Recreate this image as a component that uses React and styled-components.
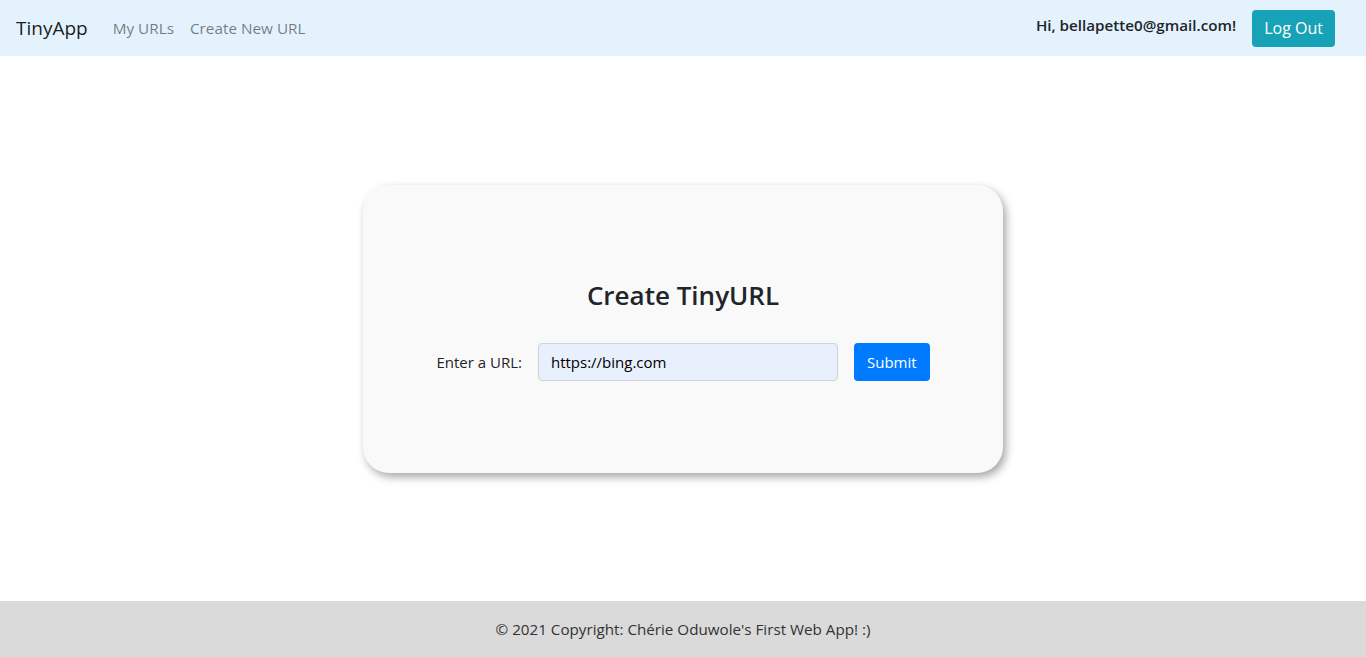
import React from "react";
import styled, { createGlobalStyle } from "styled-components";

const Global = createGlobalStyle`
  html, body { margin: 0; padding: 0; height: 100%; }
  body {
    font-family: "Open Sans", "Noto Sans", "Liberation Sans", sans-serif;
    font-size: 16px;
    line-height: 1.5;
    color: #212529;
    background: #fff;
  }
  #root { height: 100%; }
  * { box-sizing: border-box; }
`;

const Page = styled.div`
  display: flex;
  flex-direction: column;
  height: 657px;
`;

const Navbar = styled.nav`
  height: 56px;
  flex: none;
  background: #e3f2fd;
  display: flex;
  align-items: center;
  padding: 0 31px 0 16px;
`;

const Brand = styled.a`
  font-size: 19px;
  color: rgba(0, 0, 0, 0.9);
  margin-right: 25px;
  text-decoration: none;
`;

const NavLink = styled.a`
  font-size: 15.3px;
  color: rgba(0, 0, 0, 0.5);
  margin-right: 16px;
  text-decoration: none;
`;

const Spacer = styled.div`
  flex: 1;
`;

const Greeting = styled.span`
  font-size: 15.2px;
  font-weight: 600;
  color: #212529;
  margin-right: 16px;
  margin-top: -6px;
`;

const Button = styled.button`
  font-family: inherit;
  border: none;
  border-radius: 4px;
  color: #fff;
  background: ${(p) => p.$bg};
  font-size: ${(p) => p.$size || 16}px;
  height: ${(p) => p.$h || 38}px;
  padding: 0 ${(p) => p.$px || 12}px;
  cursor: pointer;
`;

const Main = styled.main`
  flex: 1;
  display: flex;
  align-items: center;
  justify-content: center;
`;

const Card = styled.section`
  width: 640px;
  height: 288px;
  background: #f9f9f9;
  border-radius: 26px;
  box-shadow: 3px 4px 8px rgba(0, 0, 0, 0.35);
  display: flex;
  flex-direction: column;
  align-items: center;
  justify-content: center;
`;

const Title = styled.h1`
  margin: 0 0 28px;
  font-size: 26px;
  font-weight: 600;
  color: #212529;
`;

const Form = styled.form`
  display: flex;
  align-items: center;
`;

const Label = styled.label`
  font-size: 15px;
  color: #212529;
  margin-right: 16px;
`;

const Input = styled.input`
  width: 300px;
  height: 38px;
  background: #e8f0fe;
  border: 1px solid #ced4da;
  border-radius: 4px;
  padding: 0 12px;
  font-family: inherit;
  font-size: 15px;
  color: #000;
  margin-right: 16px;
`;

const Footer = styled.footer`
  height: 56px;
  flex: none;
  background: #dadada;
  display: flex;
  align-items: center;
  justify-content: center;
  font-size: 15.2px;
  color: #333;
`;

export default function App() {
  return (
    <Page>
      <Global />
      <Navbar>
        <Brand href="#">TinyApp</Brand>
        <NavLink href="#">My URLs</NavLink>
        <NavLink href="#">Create New URL</NavLink>
        <Spacer />
        <Greeting>Hi, bellapette0@gmail.com!</Greeting>
        <Button $bg="#17a2b8" $h={37} $px={12}>Log Out</Button>
      </Navbar>
      <Main>
        <Card>
          <Title>Create TinyURL</Title>
          <Form onSubmit={(e) => e.preventDefault()}>
            <Label>Enter a URL:</Label>
            <Input defaultValue="https://bing.com" />
            <Button $bg="#007bff" $size={15} $px={13}>Submit</Button>
          </Form>
        </Card>
      </Main>
      <Footer>© 2021 Copyright: Chérie Oduwole's First Web App! :)</Footer>
    </Page>
  );
}
